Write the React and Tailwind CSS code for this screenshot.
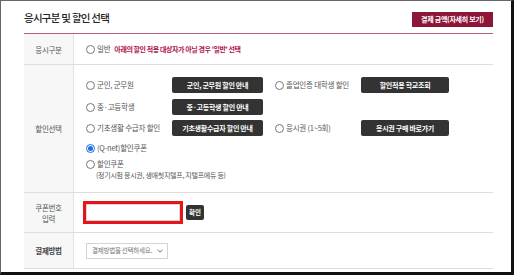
import React from 'react';

const font = { fontFamily: '"Noto Sans CJK KR", "Noto Sans", sans-serif' };

const Radio = ({ checked }) =>
    checked ? (
        <span className="inline-flex h-[9px] w-[9px] shrink-0 items-center justify-center rounded-full border border-[#1a6ee6] bg-white">
            <span className="h-[5px] w-[5px] rounded-full bg-[#1a6ee6]" />
        </span>
    ) : (
        <span className="inline-block h-[9px] w-[9px] shrink-0 rounded-full border border-[#777] bg-white" />
    );

const Option = ({ label, checked, width = 'w-[86px]' }) => (
    <div className={`flex ${width} shrink-0 items-center gap-[2px]`}>
        <Radio checked={checked} />
        <span className="text-[7.5px] leading-none tracking-[-0.03em] text-[#555]">{label}</span>
    </div>
);

const DarkButton = ({ children, width }) => (
    <button className={`flex h-[16px] ${width} shrink-0 items-center justify-center rounded-[2px] bg-[#333] text-[7px] font-bold leading-none tracking-[-0.04em] text-white`}>
        {children}
    </button>
);

const Label = ({ children }) => (
    <div className="flex w-[50px] shrink-0 items-center justify-center border-r border-[#e2e2e2] bg-[#f7f7f7] text-center text-[7.5px] leading-[11px] tracking-[-0.04em] text-[#555]">
        {children}
    </div>
);

export default function App() {
    return (
        <div
            style={font}
            className="h-[275px] w-[514px] overflow-hidden border-l border-t border-r-[3px] border-b-[3px] border-l-[#666] border-t-[#666] border-r-[#111] border-b-[#111] bg-white pl-[23px] pr-[18px]"
        >
            <div className="flex h-[32px] items-center justify-between pt-[2px]">
                <h1 className="text-[10.5px] font-medium leading-none tracking-[-0.07em] text-[#222]">응시구분 및 할인 선택</h1>
                <button className="mt-[2px] flex h-[15px] w-[81px] items-center justify-center bg-[#8c1538] text-[7px] font-bold leading-none tracking-[-0.04em] text-white">
                    결제 금액(자세히 보기)
                </button>
            </div>

            <div className="border-t border-[#b8607a]">
                {/* 응시구분 */}
                <div className="flex h-[31px] border-b border-[#dedede]">
                    <Label>응시구분</Label>
                    <div className="flex items-center pl-[12px]">
                        <Option label="일반" width="w-auto" />
                        <span className="ml-[4px] text-[7px] font-bold leading-none tracking-[-0.06em] text-[#b0124a]">
                            아래의 할인 적용 대상자가 아닐 경우 '일반' 선택
                        </span>
                    </div>
                </div>

                {/* 할인선택 */}
                <div className="flex h-[128px] border-b border-[#dedede]">
                    <Label>할인선택</Label>
                    <div className="flex flex-col pl-[12px] pt-[12px]">
                        <div className="flex h-[16px] items-center">
                            <Option label="군인, 군무원" />
                            <DarkButton width="w-[91px]">군인, 군무원 할인 안내</DarkButton>
                            <div className="ml-[12px] flex items-center">
                                <Option label="졸업인증 대학생 할인" />
                                <DarkButton width="w-[88px]">할인적용 학교조회</DarkButton>
                            </div>
                        </div>
                        <div className="mt-[6px] flex h-[16px] items-center">
                            <Option label="중·고등학생" />
                            <DarkButton width="w-[91px]">중·고등학생 할인 안내</DarkButton>
                        </div>
                        <div className="mt-[5px] flex h-[16px] items-center">
                            <Option label="기초생활 수급자 할인" />
                            <DarkButton width="w-[91px]">기초생활수급자 할인 안내</DarkButton>
                            <div className="ml-[12px] flex items-center">
                                <Option label="응시권 (1~5회)" />
                                <DarkButton width="w-[88px]">응시권 구매 바로가기</DarkButton>
                            </div>
                        </div>
                        <div className="mt-[4px] flex h-[16px] items-center">
                            <Option label="(Q-net)할인쿠폰" checked />
                        </div>
                        <div className="flex h-[16px] items-center">
                            <Option label="할인쿠폰" />
                        </div>
                        <div className="pl-[10px] text-[7px] leading-none tracking-[-0.04em] text-[#555]">
                            (정기시험 응시권, 생애첫지텔프, 지텔프에듀 등)
                        </div>
                    </div>
                </div>

                {/* 쿠폰번호 입력 */}
                <div className="flex h-[40px] border-b border-[#dedede]">
                    <Label>
                        쿠폰번호
                        <br />
                        입력
                    </Label>
                    <div className="flex items-center pl-[9px]">
                        <div className="flex h-[23px] w-[100px] items-center justify-center border-[3px] border-[#e8141b] bg-white">
                            <input className="h-[17px] w-[94px] border border-[#d6d6d6] bg-white outline-none" />
                        </div>
                        <button className="ml-[3px] flex h-[15px] w-[18px] items-center justify-center rounded-[2px] bg-[#333] text-[6.5px] font-bold leading-none text-white">
                            확인
                        </button>
                    </div>
                </div>

                {/* 결제방법 */}
                <div className="flex h-[36px] border-b border-[#dedede]">
                    <Label>
                        <span className="font-bold text-[#444]">결제방법</span>
                    </Label>
                    <div className="flex items-center pl-[12px]">
                        <div className="flex h-[16px] w-[82px] items-center justify-between border border-[#d4d4d4] bg-white pl-[5px] pr-[4px]">
                            <span className="text-[6.5px] leading-none tracking-[-0.04em] text-[#777]">결제방법을 선택하세요.</span>
                            <svg width="6" height="4" viewBox="0 0 6 4" fill="none">
                                <path d="M0.5 0.8 L3 3.2 L5.5 0.8" stroke="#666" strokeWidth="0.9" />
                            </svg>
                        </div>
                    </div>
                </div>
            </div>
        </div>
    );
}
